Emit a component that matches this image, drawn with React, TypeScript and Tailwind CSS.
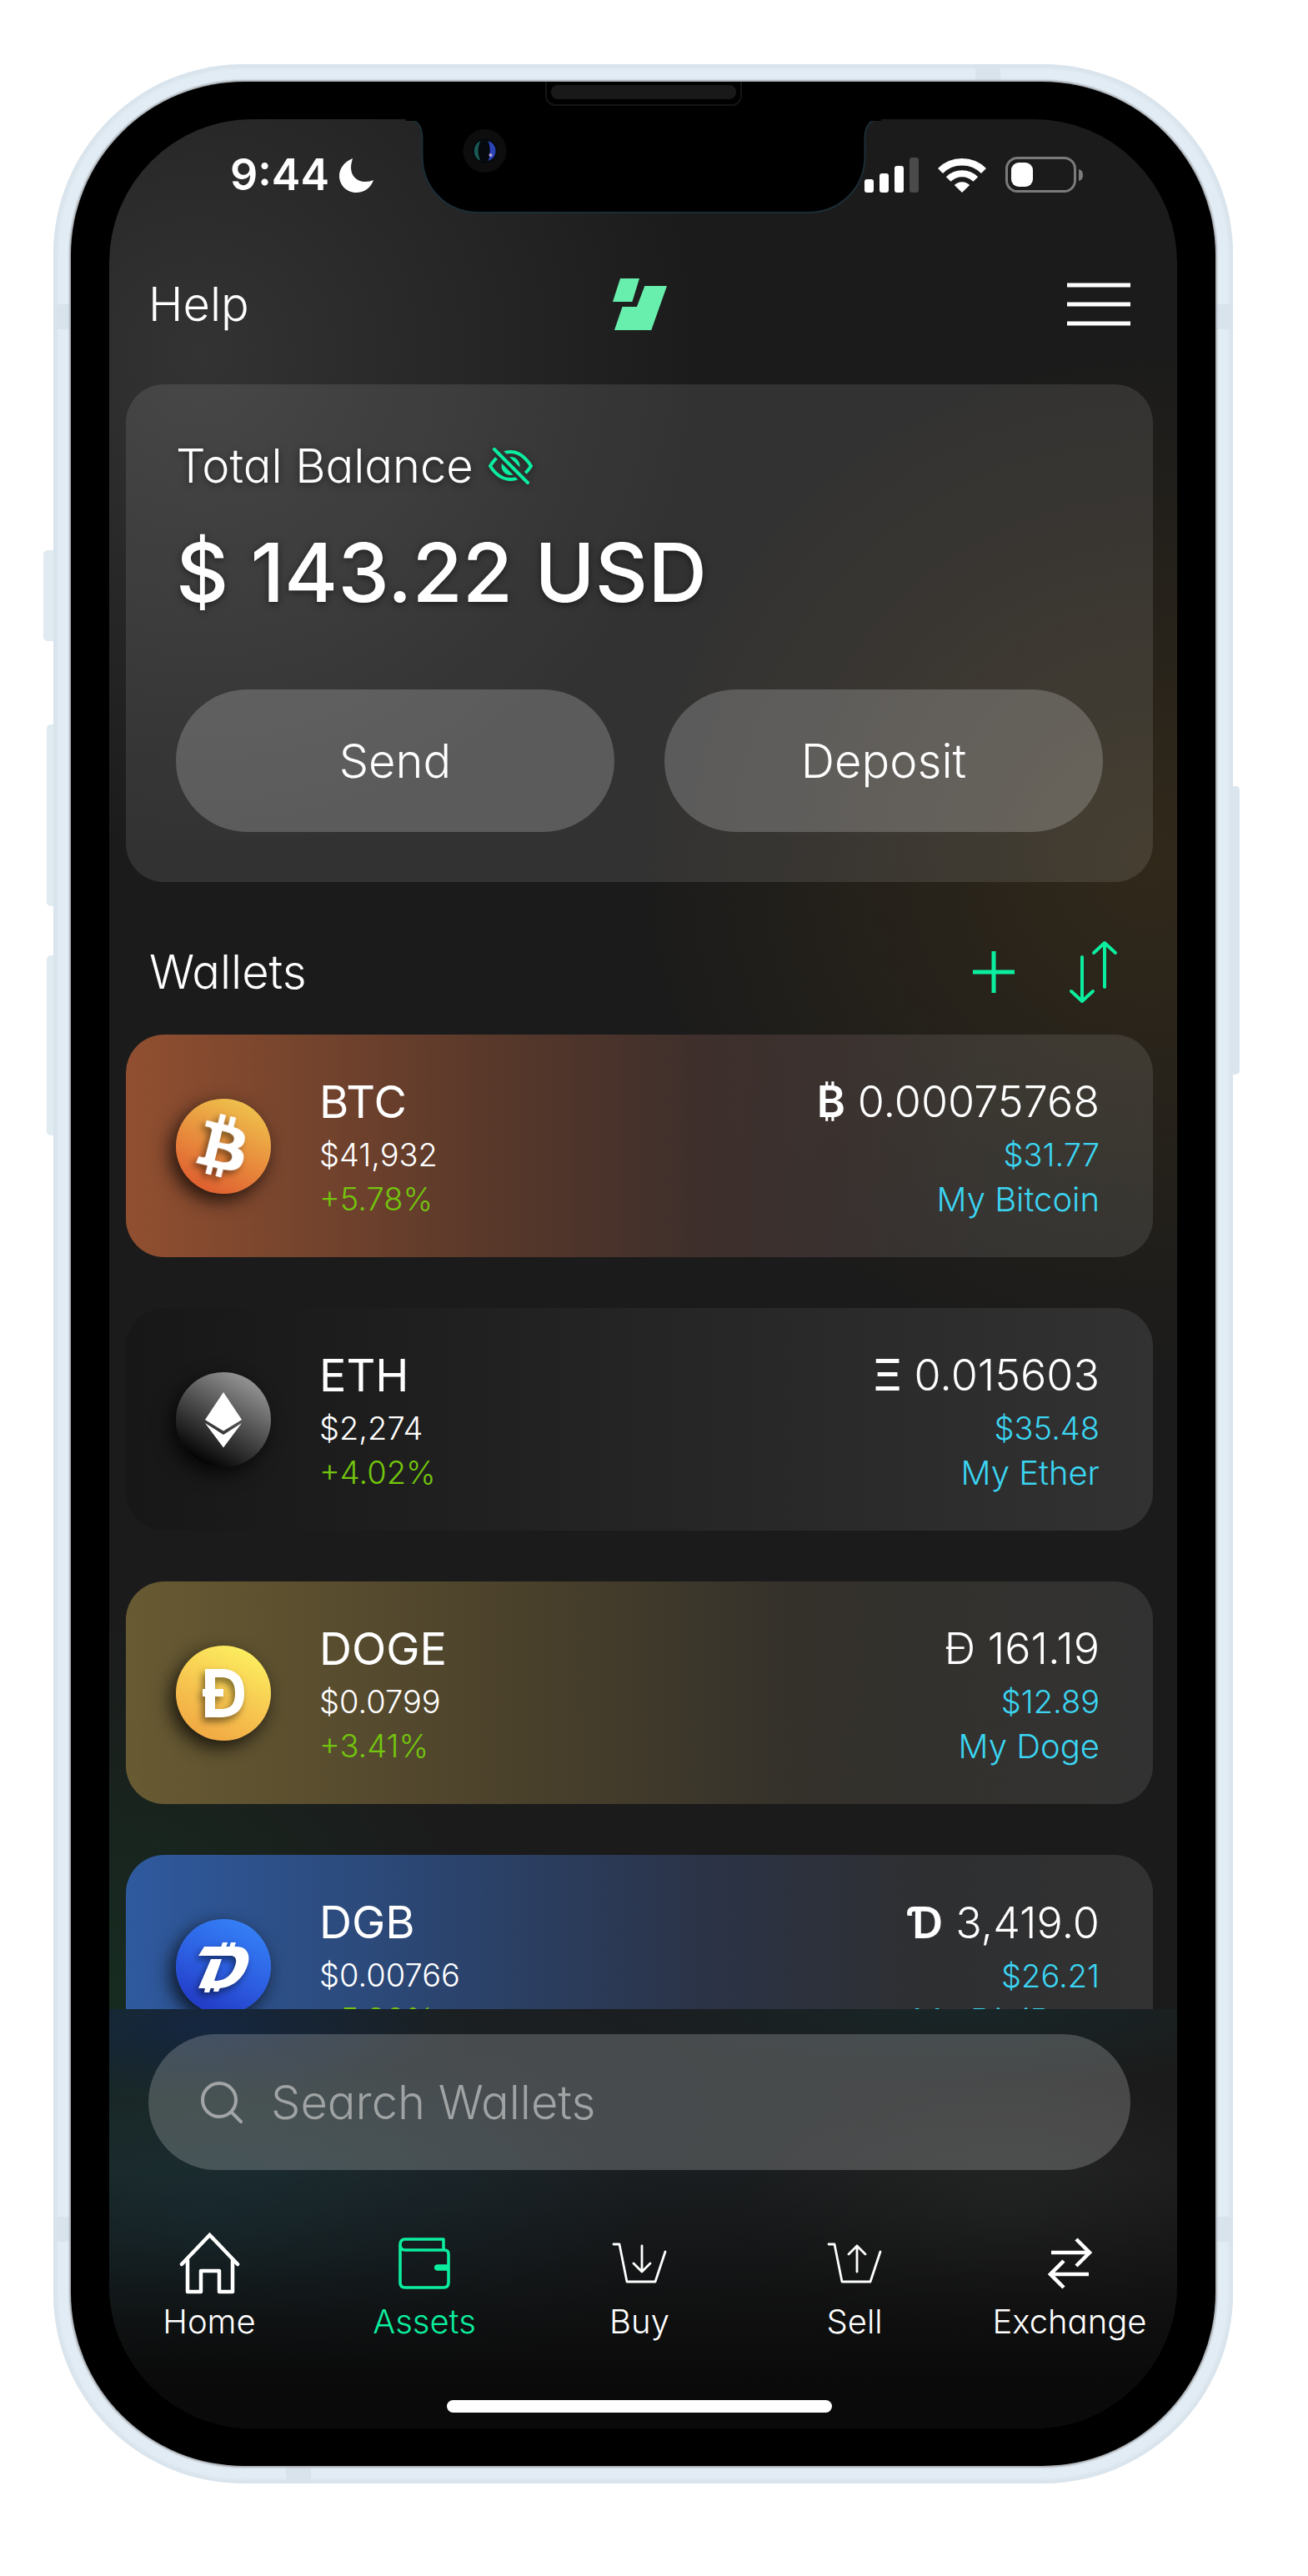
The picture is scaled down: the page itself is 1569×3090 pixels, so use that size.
import type { ReactNode } from "react";
import { FaBtc } from "react-icons/fa";

function MoonIcon() {
  return (
    <svg width="41" height="41" viewBox="0 0 41 41" fill="#fff" aria-hidden="true">
      <path d="M16 0C6 4 0 12 0 21c0 11 9 20 20 20 10 0 18-6 21-15-3 1-6 2-10 2-10 0-17-7-17-17 0-4 1-7 2-11Z" />
    </svg>
  );
}

function SignalIcon() {
  return (
    <svg width="65" height="42" viewBox="0 0 65 42" fill="#fff" aria-hidden="true">
      <rect x="0" y="26" width="11" height="16" rx="3" />
      <rect x="18" y="19" width="11" height="23" rx="3" />
      <rect x="36" y="10" width="11" height="32" rx="3" />
      <rect x="54" y="0" width="11" height="42" rx="3" fill="#4a4a4a" />
    </svg>
  );
}

function WifiIcon() {
  return (
    <svg width="58" height="42" viewBox="0 0 58 42" fill="none" stroke="#fff" aria-hidden="true">
      <path d="M3 16a37 37 0 0 1 52 0" strokeWidth="8.5" />
      <path d="M12.7 26a23 23 0 0 1 32.6 0" strokeWidth="8" />
      <path d="M19.8 33a13 13 0 0 1 18.4 0L29 42Z" fill="#fff" stroke="none" />
    </svg>
  );
}

function BatteryIcon() {
  return (
    <svg width="94" height="44" viewBox="0 0 94 44" aria-hidden="true">
      <rect x="1.5" y="1.5" width="82" height="40" rx="13" fill="none" stroke="#7b7b7b" strokeWidth="3" />
      <rect x="7" y="7" width="26" height="29" rx="9" fill="#fff" />
      <path d="M88 15c4 1 5 4 5 7s-1 6-5 7Z" fill="#7b7b7b" />
    </svg>
  );
}

function LogoIcon() {
  return (
    <svg width="65" height="62" viewBox="0 0 65 62" fill="#68efad" role="img" aria-label="Wallet logo">
      <path d="M9 0h23l-8.600 28H0Z" />
      <path d="M38.300 9H65L46.300 62H2l9.500-28h17.400Z" />
    </svg>
  );
}

function MenuIcon() {
  return (
    <svg width="76" height="52" viewBox="0 0 76 52" stroke="#fff" strokeWidth="5" aria-hidden="true">
      <path d="M0 3h76M0 26h76M0 49h76" />
    </svg>
  );
}

function EyeOffIcon() {
  return (
    <svg width="53" height="44" viewBox="0 0 53 44" fill="none" stroke="#0bee9f" strokeLinecap="round" aria-hidden="true">
      <mask id="slash" maskUnits="userSpaceOnUse" x="0" y="0" width="53" height="44">
        <rect width="53" height="44" fill="#fff" stroke="none" />
        <path d="M4 -1.500 49 43.500" stroke="#000" strokeWidth="12" />
      </mask>
      <g mask="url(#slash)">
        <path d="M2 22C9 11 17 5 26.500 5S44 11 51 22C44 33 36 38 26.500 38S9 33 2 22Z" strokeWidth="4" />
        <circle cx="26.500" cy="22" r="11" fill="#0bee9f" stroke="none" />
      </g>
      <path d="M7 2 47 42" strokeWidth="4" />
    </svg>
  );
}

function PlusIcon() {
  return (
    <svg width="50" height="50" viewBox="0 0 50 50" stroke="#0bee9f" strokeWidth="5" aria-hidden="true">
      <path d="M25 0v50M0 25h50" />
    </svg>
  );
}

function SortIcon() {
  return (
    <svg width="58" height="76" viewBox="0 0 58 76" fill="none" stroke="#0bee9f" strokeWidth="4" strokeLinecap="round" strokeLinejoin="round" aria-hidden="true">
      <path d="M15 20v53M2 61l13 12 13-12" />
      <path d="M42 56V3M29 15 42 3l13 12" />
    </svg>
  );
}

function SearchIcon() {
  return (
    <svg width="50" height="50" viewBox="0 0 50 50" fill="none" stroke="#a2a5a5" strokeWidth="4" strokeLinecap="round" aria-hidden="true">
      <circle cx="22" cy="22" r="20" />
      <path d="m37 37 11 11" />
    </svg>
  );
}

function HomeIcon() {
  return (
    <svg width="73" height="74" viewBox="0 0 73 74" fill="none" stroke="currentColor" strokeWidth="4.500" strokeLinecap="round" aria-hidden="true">
      <path d="M3 38 36.500 3 70 38" />
      <path d="M10 33v38h16V46h22v25h16V33" strokeLinejoin="round" />
    </svg>
  );
}

function WalletIcon() {
  return (
    <svg width="62" height="62" viewBox="0 0 62 62" fill="none" stroke="currentColor" strokeWidth="3.600" strokeLinejoin="round" aria-hidden="true">
      <path d="M2 9v45q0 6 6 6h46q6 0 6-6V20q0-5-5-5H8q-6 0-6-6.500T8 2h46v13" />
      <path d="M60 33H46q-3 0-3 3t3 3h14Z" fill="currentColor" stroke="none" />
      <path d="M60 34H47q-2 0-2 2t2 2h13" />
    </svg>
  );
}

function BasketIcon({ up }: { up?: boolean }) {
  return (
    <svg width="66" height="50" viewBox="0 0 66 50" fill="none" stroke="currentColor" strokeWidth="2.800" strokeLinecap="round" strokeLinejoin="round" aria-hidden="true">
      <path d="M2 2h7l9 45h34l12-36" />
      {up ? <path d="M36 35V4M26 14 36 4l10 10" /> : <path d="M36 4v31M26 25l10 10 10-10" />}
    </svg>
  );
}

function ExchangeIcon() {
  return (
    <svg width="53" height="62" viewBox="0 0 53 62" fill="none" stroke="currentColor" strokeWidth="4.500" aria-hidden="true">
      <path d="M4 18h46M34 2l16 16-16 16" />
      <path d="M49 44H3M19 28 3 44l16 16" />
    </svg>
  );
}

function EtherMark() {
  return (
    <svg width="114" height="114" viewBox="0 0 114 114" fill="#fff" aria-hidden="true">
      <path d="m57 24 22 33-22 13.500L35 57Z" />
      <path d="m35 61 22 14 22-14-22 29.500Z" />
    </svg>
  );
}

function DogeMark() {
  return (
    <svg width="114" height="114" viewBox="0 0 114 114" fill="#fff" className="drop-shadow-[-3px_5px_4px_rgba(0,0,0,0.5)]" aria-hidden="true">
      <path fillRule="evenodd" d="M35 28h19c19 0 28 10 28 29s-9 29-30 29H35Zm12 10v38h7c12 0 17-6 17-19s-5-19-16-19Z" />
      <path d="M32 52h25v9H32Z" />
    </svg>
  );
}

function DigiMark() {
  return (
    <svg width="114" height="114" viewBox="0 0 114 114" fill="#fff" className="drop-shadow-[-3px_5px_4px_rgba(0,0,0,0.5)]" aria-hidden="true">
      <path d="M34 33h38c16 0 18 13 13 25-6 15-19 25-35 25H27l15-35h13l-9 26h4c10-1 18-8 21-18 3-8 0-12-5-12H27Z" />
      <path d="m56 28h6l-2 6h-6Zm10 0h6l-2 6h-6ZM35 82h7l-2 6h-6Zm11 0h7l-2 5h-6Z" />
    </svg>
  );
}

type Wallet = {
  ticker: string;
  price: string;
  change: string;
  symbol: string;
  symbolClass: string;
  amount: string;
  value: string;
  name: string;
  card: string;
  coin: string;
  mark: ReactNode;
};

const wallets: Wallet[] = [
  {
    ticker: "BTC",
    price: "$41,932",
    change: "+5.78%",
    symbol: "₿",
    symbolClass: "font-semibold",
    amount: "0.00075768",
    value: "$31.77",
    name: "My Bitcoin",
    card: "bg-[linear-gradient(90deg,#914f30,#58382a_36%,#3e2f2c_56%,rgba(255,255,255,0.1)_84%)]",
    coin: "bg-[linear-gradient(25deg,#de572d_5%,#e8893c_45%,#efc24c_90%)]",
    mark: <FaBtc size={74} color="#fff" className="rotate-[14deg] drop-shadow-[-3px_5px_4px_rgba(0,0,0,0.5)]" aria-hidden="true" />,
  },
  {
    ticker: "ETH",
    price: "$2,274",
    change: "+4.02%",
    symbol: "Ξ",
    symbolClass: "font-medium",
    amount: "0.015603",
    value: "$35.48",
    name: "My Ether",
    card: "bg-[linear-gradient(90deg,#171717,#262626_55%,#323232)]",
    coin: "bg-[linear-gradient(30deg,#000_12%,#999_90%)]",
    mark: <EtherMark />,
  },
  {
    ticker: "DOGE",
    price: "$0.0799",
    change: "+3.41%",
    symbol: "Đ",
    symbolClass: "font-light",
    amount: "161.19",
    value: "$12.89",
    name: "My Doge",
    card: "bg-[linear-gradient(90deg,#685a32,#49402b_40%,#34312b_65%,#323232)]",
    coin: "bg-[linear-gradient(25deg,#f1a843_10%,#f6c44f_45%,#fced5f_88%)]",
    mark: <DogeMark />,
  },
  {
    ticker: "DGB",
    price: "$0.00766",
    change: "+5.80%",
    symbol: "Ɗ",
    symbolClass: "font-['Noto_Sans'] font-semibold",
    amount: "3,419.0",
    value: "$26.21",
    name: "My DigiByte",
    card: "bg-[linear-gradient(90deg,#2f5a9f,#2b4570_30%,#2b3347_56%,#2e2f31_78%,#323232)]",
    coin: "bg-[linear-gradient(25deg,#2239c5_10%,#2c5ce0_45%,#347ff6_88%)]",
    mark: <DigiMark />,
  },
];

function WalletCard({ wallet }: { wallet: Wallet }) {
  return (
    <li className={`flex h-[267px] shrink-0 items-center rounded-[46px] pr-[64px] pl-[60px] ${wallet.card}`}>
      <span className={`mr-[58px] flex size-[114px] shrink-0 items-center justify-center rounded-full shadow-[-6px_8px_22px_rgba(0,0,0,0.75)] ${wallet.coin}`}>
        {wallet.mark}
      </span>
      <div className="flex-1">
        <h3 className="text-[54px] leading-[74px] font-normal">{wallet.ticker}</h3>
        <p className="text-[38px] leading-[53px]">{wallet.price}</p>
        <p className="text-[38px] leading-[53px] text-[#73c50d]">{wallet.change}</p>
      </div>
      <div className="text-right">
        <p className="text-[52px] leading-[74px]">
          <span className={wallet.symbolClass}>{wallet.symbol}</span> {wallet.amount}
        </p>
        <p className="text-[38px] leading-[53px] text-[#3bd5f2]">{wallet.value}</p>
        <p className="text-[40px] leading-[53px] text-[#3bd5f2]">{wallet.name}</p>
      </div>
    </li>
  );
}

const tabs: { label: string; icon: ReactNode; active?: boolean }[] = [
  { label: "Home", icon: <HomeIcon /> },
  { label: "Assets", icon: <WalletIcon />, active: true },
  { label: "Buy", icon: <BasketIcon /> },
  { label: "Sell", icon: <BasketIcon up /> },
  { label: "Exchange", icon: <ExchangeIcon /> },
];

function Notch() {
  return (
    <svg width="571" height="114" viewBox="0 0 571 114" className="absolute top-0 left-1/2 -translate-x-1/2" aria-hidden="true">
      <path d="M0 0C16 0 20 10 20 24v20c0 38 28 68 68 68h394c40 0 69-30 69-68V24c0-14 4-24 20-24Z" fill="#000" stroke="#1b2e36" strokeWidth="2" />
      <path d="M0 0H571" stroke="#000" strokeWidth="4" />
      <circle cx="95" cy="38" r="26" fill="#0d0d0e" />
      <circle cx="95" cy="38" r="15" fill="#06090d" />
      <path d="M90 26c-10 4-10 20 0 24-4-7-4-17 0-24Z" fill="#1a5a55" />
      <path d="M99 26c12 4 12 20 0 24 3-7 3-17 0-24Z" fill="#2b45b8" />
      <circle cx="102" cy="43" r="2" fill="#b9a0e0" />
    </svg>
  );
}

function StatusBar() {
  return (
    <div className="flex h-[134px] items-center justify-between pr-[112px] pl-[145px]">
      <div className="flex items-center gap-[12px]">
        <span className="text-[52px] leading-[60px] font-semibold">9:44</span>
        <MoonIcon />
      </div>
      <div className="flex items-center gap-[23px]">
        <SignalIcon />
        <WifiIcon />
        <BatteryIcon />
      </div>
    </div>
  );
}

function BalanceCard() {
  return (
    <section className="mt-2 rounded-[46px] bg-white/10 px-[60px] pt-[70px] pb-[60px]">
      <div className="flex items-center gap-[18px] [filter:drop-shadow(0_2px_4px_rgba(0,0,0,0.5))]">
        <h1 className="text-[56px] leading-[56px]">Total Balance</h1>
        <button type="button" aria-label="Hide balance">
          <EyeOffIcon />
        </button>
      </div>
      <p className="mt-[50px] text-[98px] leading-[100px] font-medium [text-shadow:0_2px_8px_rgba(0,0,0,0.5)]">$ 143.22 USD</p>
      <div className="mt-[90px] grid grid-cols-2 gap-[60px]">
        <button type="button" className="h-[171px] rounded-[86px] bg-white/20 text-[56px]">
          Send
        </button>
        <button type="button" className="h-[171px] rounded-[86px] bg-white/20 text-[56px]">
          Deposit
        </button>
      </div>
    </section>
  );
}

function BottomPanel() {
  return (
    <div className="bg-[linear-gradient(180deg,transparent_38%,rgba(10,10,10,0.45)_62%,#0a0a0a_90%),radial-gradient(300px_90px_at_110px_20px,rgba(20,38,72,0.8),transparent),radial-gradient(520px_220px_at_120px_270px,rgba(28,52,60,0.75),transparent),radial-gradient(420px_90px_at_1040px_0px,rgba(24,40,42,0.8),transparent),radial-gradient(320px_160px_at_1080px_240px,rgba(38,40,39,0.8),transparent),radial-gradient(800px_400px_at_400px_120px,rgba(26,36,42,0.6),transparent)] pt-[30px] pr-[29px] pb-[19px] pl-[20px]">
      <label className="mx-[27px] flex h-[163px] items-center gap-[34px] rounded-[82px] bg-white/20 px-[63px]">
        <SearchIcon />
        <input
          type="search"
          aria-label="Search Wallets"
          placeholder="Search Wallets"
          className="min-w-0 flex-1 bg-transparent text-[56px] outline-none placeholder:text-[#a0a3a3]"
        />
      </label>
      <nav className="-mx-[29px] mt-[72px] grid grid-cols-5">
        {tabs.map((tab) => (
          <a key={tab.label} href={`#${tab.label.toLowerCase()}`} className={`flex flex-col items-center text-[40px] leading-[60px] ${tab.active ? "text-[#0bee9f]" : "text-white"}`}>
            <span className="flex h-[80px] items-center">{tab.icon}</span>
            {tab.label}
          </a>
        ))}
      </nav>
      <div className="mx-auto mt-[64px] h-[15px] w-[462px] rounded-full bg-white" />
    </div>
  );
}

export default function App() {
  return (
    <main className="bg-white pt-[77px] pr-[90px] pb-[109px] pl-[64px] font-['Inter',sans-serif] font-light text-white [font-feature-settings:'cv11']">
      <div className="relative">
        <div className="absolute top-[583px] -left-[12px] h-[109px] w-[16px] rounded-l-[5px] bg-[#e0eaf1]" />
        <div className="absolute top-[792px] -left-[8px] h-[218px] w-[12px] rounded-l-[5px] bg-[#e0eaf1]" />
        <div className="absolute top-[1069px] -left-[8px] h-[216px] w-[12px] rounded-l-[5px] bg-[#e0eaf1]" />
        <div className="absolute top-[866px] -right-[8px] h-[346px] w-[12px] rounded-r-[5px] bg-[#dbe5ed]" />
        <div className="relative overflow-hidden rounded-[228px] bg-[#e2ecf4] p-[21px] shadow-[inset_0_0_3px_5px_#dae4ec]">
          <div className="absolute top-0 right-[279px] h-[22px] w-[30px] bg-[#d8e3eb]" />
          <div className="absolute bottom-0 left-[279px] h-[22px] w-[30px] bg-[#d8e3eb]" />
          <div className="absolute top-[288px] left-0 h-[30px] w-full bg-[#d9e3eb]" />
          <div className="absolute bottom-[290px] left-0 h-[30px] w-full bg-[#d9e3eb]" />
          <div className="relative rounded-[208px] bg-black px-[46px] py-[45px] shadow-[0_0_2px_2px_#a8adb2]">
            <div className="absolute top-0 left-1/2 flex h-[29px] w-[236px] -translate-x-1/2 justify-center rounded-b-[12px] border-2 border-t-0 border-[#151515] pt-[4px]">
              <div className="h-[17px] w-[222px] rounded-[8px] bg-[#191919]" />
            </div>
            <div className="relative overflow-hidden rounded-[172px] bg-[#1b1b1b] bg-[radial-gradient(circle_600px_at_110px_280px,#333333,transparent),radial-gradient(circle_620px_at_1250px_890px,rgba(50,41,26,0.95),transparent),radial-gradient(circle_440px_at_0px_2240px,rgba(22,46,34,0.85),transparent)]">
              <StatusBar />
              <div className="pr-[29px] pl-[20px]">
                <header className="grid h-[176px] grid-cols-[1fr_auto_1fr] items-center px-[27px]">
                  <a href="#help" className="justify-self-start text-[56px] leading-[60px]">
                    Help
                  </a>
                  <LogoIcon />
                  <button type="button" aria-label="Menu" className="justify-self-end">
                    <MenuIcon />
                  </button>
                </header>
                <BalanceCard />
                <div className="mt-[33px] flex h-[150px] items-center pr-[42px] pl-[28px]">
                  <h2 className="flex-1 text-[56px] leading-[60px]">Wallets</h2>
                  <button type="button" aria-label="Add wallet">
                    <PlusIcon />
                  </button>
                  <button type="button" aria-label="Sort wallets" className="ml-[66px]">
                    <SortIcon />
                  </button>
                </div>
                <ul className="flex h-[1169px] flex-col gap-[61px] overflow-hidden">
                  {wallets.map((wallet) => (
                    <WalletCard key={wallet.ticker} wallet={wallet} />
                  ))}
                </ul>
              </div>
              <BottomPanel />
              <Notch />
            </div>
          </div>
        </div>
      </div>
    </main>
  );
}
